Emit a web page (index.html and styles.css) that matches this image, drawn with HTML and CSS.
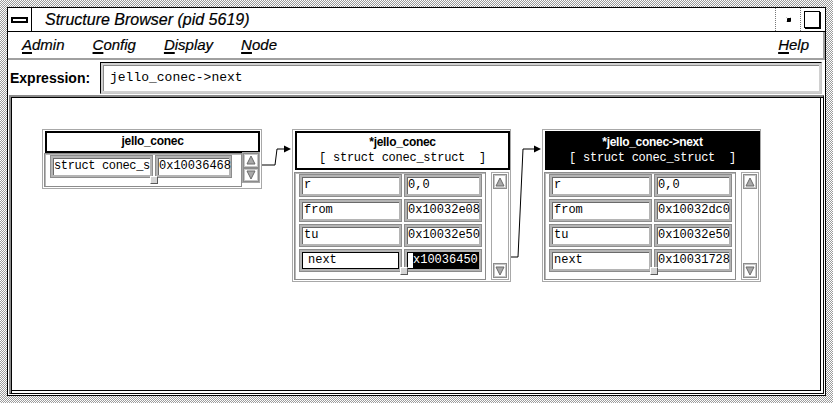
FILE: index.html
```html
<!DOCTYPE html>
<html>
<head>
<meta charset="utf-8">
<link rel="stylesheet" href="styles.css">
</head>
<body>
<div class="frame">
  <div class="win">
    <div class="titlebar">
      <div class="tb-menu"><span class="bar"></span></div>
      <div class="title">Structure Browser (pid 5619)</div>
      <div class="tb-btn"><span class="dot"></span></div>
      <div class="tb-btn"><span class="sq"></span></div>
    </div>
    <div class="menubar">
      <span class="mi"><u>A</u>dmin</span>
      <span class="mi"><u>C</u>onfig</span>
      <span class="mi"><u>D</u>isplay</span>
      <span class="mi"><u>N</u>ode</span>
      <span class="spacer"></span>
      <span class="mi"><u>H</u>elp</span>
    </div>
    <div class="exprrow">
      <label class="exlabel">Expression:</label>
      <div class="exfield">jello_conec-&gt;next</div>
    </div>
    <div class="canvas">
      <svg class="links" width="812" height="297" viewBox="0 0 812 297">
        <polyline points="250,68 264,68 266,52 274,52" fill="none" stroke="#000" stroke-width="1"/>
        <polygon points="273,48.5 280,52 273,55.5" fill="#000"/>
        <polyline points="499,160 507,160 512,52 524,52" fill="none" stroke="#000" stroke-width="1"/>
        <polygon points="523,48.5 530,52 523,55.5" fill="#000"/>
      </svg>

      <div class="node n1">
        <div class="hdr small"><div class="hname">jello_conec</div></div>
        <div class="body">
          <div class="panel p1">
            <div class="row"><div class="fld lbl">struct conec_s</div><div class="fld val">0x10036468</div></div>
            <span class="knob"></span>
          </div>
          <div class="sbar s1">
            <span class="arr"><svg width="10" height="10" viewBox="0 0 10 10"><polygon points="5,1 9,9 1,9" fill="#a8a8a8" stroke="#6a6a6a" stroke-width="1"/></svg></span>
            <span class="arr"><svg width="10" height="10" viewBox="0 0 10 10"><polygon points="1,1 9,1 5,9" fill="#a8a8a8" stroke="#6a6a6a" stroke-width="1"/></svg></span>
          </div>
        </div>
      </div>

      <div class="node n2">
        <div class="hdr"><div class="hname">*jello_conec</div><div class="htype">[ struct conec_struct  ]</div></div>
        <div class="body">
          <div class="panel">
            <div class="row"><div class="fld lbl">r</div><div class="fld val">0,0</div></div>
            <div class="row"><div class="fld lbl">from</div><div class="fld val">0x10032e08</div></div>
            <div class="row"><div class="fld lbl">tu</div><div class="fld val">0x10032e50</div></div>
            <div class="row"><div class="fld lbl sel">next</div><div class="fld val sel"><span class="hl">x10036450</span></div></div>
            <span class="knob"></span>
          </div>
          <div class="sbar">
            <span class="arr"><svg width="10" height="10" viewBox="0 0 10 10"><polygon points="5,1 9,9 1,9" fill="#a8a8a8" stroke="#6a6a6a" stroke-width="1"/></svg></span>
            <span class="arr"><svg width="10" height="10" viewBox="0 0 10 10"><polygon points="1,1 9,1 5,9" fill="#a8a8a8" stroke="#6a6a6a" stroke-width="1"/></svg></span>
          </div>
        </div>
      </div>

      <div class="node n3">
        <div class="hdr inv"><div class="hname">*jello_conec-&gt;next</div><div class="htype">[ struct conec_struct  ]</div></div>
        <div class="body">
          <div class="panel">
            <div class="row"><div class="fld lbl">r</div><div class="fld val">0,0</div></div>
            <div class="row"><div class="fld lbl">from</div><div class="fld val">0x10032dc0</div></div>
            <div class="row"><div class="fld lbl">tu</div><div class="fld val">0x10032e50</div></div>
            <div class="row"><div class="fld lbl">next</div><div class="fld val">0x10031728</div></div>
            <span class="knob"></span>
          </div>
          <div class="sbar">
            <span class="arr"><svg width="10" height="10" viewBox="0 0 10 10"><polygon points="5,1 9,9 1,9" fill="#a8a8a8" stroke="#6a6a6a" stroke-width="1"/></svg></span>
            <span class="arr"><svg width="10" height="10" viewBox="0 0 10 10"><polygon points="1,1 9,1 5,9" fill="#a8a8a8" stroke="#6a6a6a" stroke-width="1"/></svg></span>
          </div>
        </div>
      </div>
    </div>
  </div>
</div>
</body>
</html>
```

FILE: styles.css
```css
* { box-sizing: border-box; }
body { margin: 0; background: #fff; font-family: "Liberation Sans", Arial, sans-serif; color: #000; }

.frame {
  width: 833px; height: 403px; padding: 7px;
  background: repeating-conic-gradient(#9c9c9c 0 25%, #ffffff 0 50%) 0 0 / 2px 2px;
}
.win {
  height: 100%; border: 1px solid #000; background: #fff;
  display: flex; flex-direction: column;
}

/* title bar */
.titlebar { height: 24px; flex: none; display: flex; border-bottom: 1px solid #000; }
.tb-menu { width: 24px; border-right: 1px solid #000; display: flex; align-items: center; justify-content: center; }
.tb-menu .bar { width: 17px; height: 6px; border: 2px solid #000; background: #fff; }
.title { flex: 1; padding-left: 13px; font-style: italic; font-size: 16px; line-height: 23px; -webkit-text-stroke: 0.2px #000; }
.tb-btn { width: 25px; border-left: 1px dotted #777; display: flex; align-items: center; justify-content: center; }
.tb-btn .dot { width: 5px; height: 5px; background: #000; border-radius: 1px; box-shadow: inset 1px 1px 0 #fff; }
.tb-btn .sq { width: 16px; height: 17px; border: 1px solid #000; box-shadow: 1px 1px 0 #000; margin: 0 2px 1px 0; background: #fff; }

/* menu bar */
.menubar {
  height: 28px; flex: none; display: flex; padding-left: 0;
  border-right: 2px solid #a0a0a0; border-bottom: 2px solid #a0a0a0;
  font-style: italic; font-size: 15px; line-height: 26px; -webkit-text-stroke: 0.2px #000;
}
.mi { padding: 0 14px; }
.mi u { text-decoration-thickness: 2px; text-underline-offset: 2px; }
.spacer { flex: 1; }

/* expression row */
.exprrow { height: 35px; flex: none; display: flex; align-items: center; padding: 0 3px 0 2px; }
.exlabel { width: 90px; font-weight: bold; font-size: 14px; }
.exfield {
  flex: 1; height: 32px; padding-left: 9px;
  border: 1px solid #000; border-right-color: #c8c8c8; border-bottom-color: #c8c8c8;
  box-shadow: inset 0 0 0 2px #d0d0d0, inset 3px 3px 0 #8a8a8a;
  font-family: "Liberation Mono", monospace; font-size: 13px; line-height: 30px;
}

/* canvas */
.canvas {
  flex: 1; position: relative; margin: 0 1px 1px 1px;
  border-top: 2px solid #8a8a8a; border-left: 2px solid #8a8a8a;
  border-right: 1px solid #000; border-bottom: 1px solid #000;
  box-shadow: inset 1px 1px 0 #000, inset -2px -2px 0 #fff, inset -3px -3px 0 #000;
  background: #fff;
}
.links { position: absolute; left: 0; top: 0; }

.node { position: absolute; border: 1px solid #a8a8a8; background: #fff; padding: 1px 0 0 2px; }
.n1 { left: 31px; top: 32px; width: 220px; height: 60px; }
.n2 { left: 281px; top: 32px; width: 219px; height: 153px; }
.n3 { left: 531px; top: 32px; width: 219px; height: 153px; }

.hdr { width: 215px; height: 39px; border: 2px solid #000; text-align: center; padding-top: 2px; }
.hdr.small { height: 22px; padding-top: 1px; }
.hdr.inv { background: #000; color: #fff; }
.hname { font-weight: bold; font-size: 12px; line-height: 15px; letter-spacing: -0.3px; }
.htype { font-family: "Liberation Mono", monospace; font-size: 12px; line-height: 17px; white-space: pre; letter-spacing: -0.25px; }

.body { display: flex; margin: 2px 0 0 -1px; gap: 5px; }
.n1 .body { margin-top: 0; gap: 0; }

.panel {
  position: relative; width: 192px; height: 108px; padding: 1px 0 0 4px;
  border: 1px solid #8c8c8c; box-shadow: inset 1px 1px 0 #b8b8b8;
  display: flex; flex-direction: column; gap: 2px;
}
.panel.p1 { width: 198px; height: 34px; padding: 1px 0 0 5px; }

.row { display: flex; gap: 2px; }
.fld {
  height: 23px; overflow: hidden; white-space: nowrap;
  border: 1px solid #8c8c8c;
  box-shadow: inset 0 0 0 2px #b4b4b4, inset 3px 3px 0 #6a6a6a;
  padding-left: 4px;
  font-family: "Liberation Mono", monospace; font-size: 12px; line-height: 21px;
}
.lbl { width: 103px; }
.p1 .lbl { padding-left: 3px; letter-spacing: -0.35px; }
.val { width: 78px; padding-left: 3px; }
.p1 .val { width: 77px; }
.fld.sel { box-shadow: inset 0 0 0 2px #b4b4b4, inset 0 0 0 3px #000; padding-left: 8px; }
.val.sel { padding-left: 8px; }
.hl { background: #000; color: #fff; display: inline-block; line-height: 15px; padding: 0 1px 0 0; }

.knob {
  position: absolute; left: 105px; bottom: 4px; width: 8px; height: 8px;
  background: #d4d4d4; border: 1px solid; border-color: #fff #5a5a5a #5a5a5a #fff;
}
.p1 .knob { bottom: 2px; }

.sbar {
  width: 18px; height: 108px; border: 1px solid #a8a8a8; padding: 1px;
  display: flex; flex-direction: column; justify-content: space-between;
}
.sbar.s1 { height: 31px; margin-top: -1px; padding: 0; }
.arr {
  height: 15px; display: flex; align-items: center; justify-content: center;
  border: 1px solid #8c8c8c; box-shadow: inset 0 0 0 1px #c6c6c6; background: #fff;
}
```
